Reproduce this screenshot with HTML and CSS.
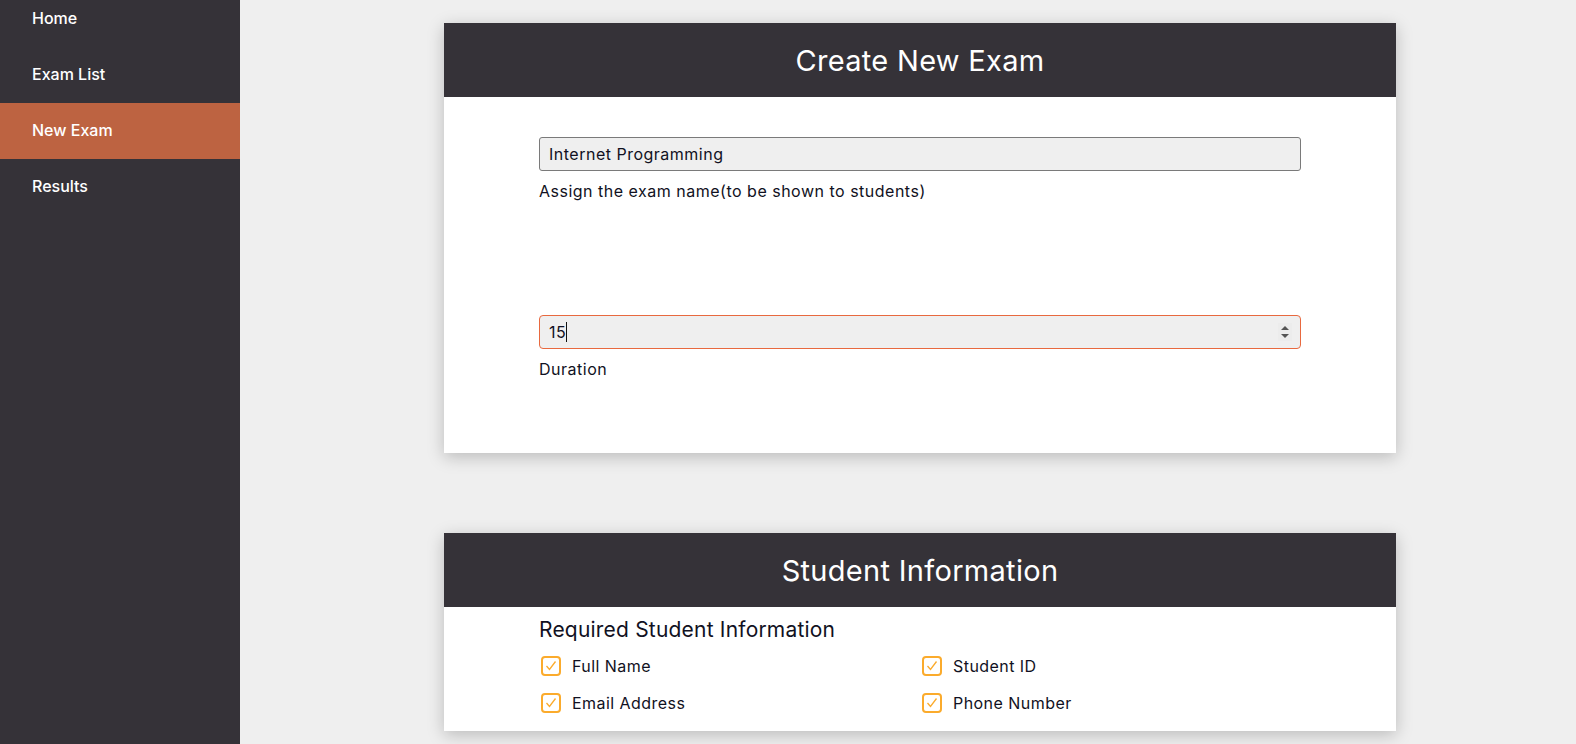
FILE: index.html
```html
<!DOCTYPE html>
<html lang="en">
<head>
<meta charset="utf-8">
<title>Create New Exam</title>
<link rel="stylesheet" href="styles.css">
</head>
<body>
<aside class="sidebar">
  <nav class="nav">
    <a class="nav-item" href="#">Home</a>
    <a class="nav-item" href="#">Exam List</a>
    <a class="nav-item active" href="#">New Exam</a>
    <a class="nav-item" href="#">Results</a>
  </nav>
</aside>
<main class="main">
  <section class="card">
    <header class="card-header"><h1 class="card-title">Create New Exam</h1></header>
    <div class="card-body exam-body">
      <div class="field">
        <input class="text-input" type="text" value="Internet Programming">
        <label class="hint">Assign the exam name(to be shown to students)</label>
      </div>
      <div class="field field-gap">
        <div class="input-wrap">
          <input class="text-input focused" type="number" value="15">
          <span class="caret"></span>
          <span class="spinner">
            <svg width="10" height="18" viewBox="0 0 10 18"><path d="M1 7 L5 3 L9 7 Z" fill="#555"/><path d="M1 11 L5 15 L9 11 Z" fill="#555"/></svg>
          </span>
        </div>
        <label class="hint">Duration</label>
      </div>
    </div>
  </section>

  <section class="card card-second">
    <header class="card-header"><h1 class="card-title">Student Information</h1></header>
    <div class="card-body info-body">
      <h2 class="info-heading">Required Student Information</h2>
      <div class="check-grid">
        <div class="check-item"><span class="box"><svg width="20" height="20" viewBox="0 0 20 20"><rect x="1" y="1" width="18" height="18" rx="3" fill="none" stroke="#fbab2c" stroke-width="2"/><path d="M5.5 10 L8.5 13.5 L14.5 5.5" fill="none" stroke="#fbab2c" stroke-width="1.3"/></svg></span><span class="check-label">Full Name</span></div>
        <div class="check-item"><span class="box"><svg width="20" height="20" viewBox="0 0 20 20"><rect x="1" y="1" width="18" height="18" rx="3" fill="none" stroke="#fbab2c" stroke-width="2"/><path d="M5.5 10 L8.5 13.5 L14.5 5.5" fill="none" stroke="#fbab2c" stroke-width="1.3"/></svg></span><span class="check-label">Student ID</span></div>
        <div class="check-item"><span class="box"><svg width="20" height="20" viewBox="0 0 20 20"><rect x="1" y="1" width="18" height="18" rx="3" fill="none" stroke="#fbab2c" stroke-width="2"/><path d="M5.5 10 L8.5 13.5 L14.5 5.5" fill="none" stroke="#fbab2c" stroke-width="1.3"/></svg></span><span class="check-label">Email Address</span></div>
        <div class="check-item"><span class="box"><svg width="20" height="20" viewBox="0 0 20 20"><rect x="1" y="1" width="18" height="18" rx="3" fill="none" stroke="#fbab2c" stroke-width="2"/><path d="M5.5 10 L8.5 13.5 L14.5 5.5" fill="none" stroke="#fbab2c" stroke-width="1.3"/></svg></span><span class="check-label">Phone Number</span></div>
      </div>
    </div>
  </section>
</main>
</body>
</html>
```

FILE: styles.css
```css
* { box-sizing: border-box; }
html, body { margin: 0; padding: 0; }
body {
  display: flex;
  min-height: 744px;
  height: 744px;
  overflow: hidden;
  background: #efefef;
  font-family: "Inter", "DejaVu Sans", sans-serif;
  color: #111122;
}
.sidebar {
  width: 240px;
  flex: 0 0 240px;
  background: #353238;
}
.nav {
  display: flex;
  flex-direction: column;
  margin-top: -9px;
}
.nav-item {
  display: block;
  height: 56px;
  line-height: 54px;
  padding: 0 0 2px 32px;
  color: #ffffff;
  text-decoration: none;
  font-size: 16px;
  font-weight: 500;
}
.nav-item.active { background: #bd6341; }
.main {
  flex: 1;
  padding: 23px 0 0 204px;
}
.card {
  width: 952px;
  background: #ffffff;
  box-shadow: 0 4px 16px rgba(0,0,0,0.22);
}
.card-second { margin-top: 80px; }
.card-header {
  height: 74px;
  background: #353238;
  display: flex;
  align-items: center;
  justify-content: center;
}
.card-title {
  margin: 0;
  color: #ffffff;
  font-size: 29px;
  font-weight: 400;
  letter-spacing: 0.3px;
}
.card-body { padding: 0 95px; }
.exam-body { padding-top: 40px; padding-bottom: 72px; }
.field { display: flex; flex-direction: column; }
.field-gap { margin-top: 112px; }
.text-input {
  width: 100%;
  height: 34px;
  border: 1px solid #7a7a7a;
  border-radius: 3px;
  background: #efefef;
  padding: 0 9px;
  font-family: inherit;
  font-size: 16px;
  letter-spacing: 0.5px;
  color: #111122;
  outline: none;
}
.text-input.focused { border-color: #e8693f; border-radius: 4px; }
.text-input[type=number]::-webkit-inner-spin-button,
.text-input[type=number]::-webkit-outer-spin-button { -webkit-appearance: none; margin: 0; }
.input-wrap { position: relative; }
.caret {
  position: absolute;
  left: 27px;
  top: 7px;
  width: 1px;
  height: 20px;
  background: #111;
}
.spinner {
  position: absolute;
  right: 9px;
  top: 8px;
  width: 14px;
  height: 18px;
  display: flex;
  justify-content: center;
  background: #ececec;
}
.hint {
  display: block;
  margin-top: 8px;
  line-height: 24px;
  font-size: 16px;
  letter-spacing: 0.5px;
}
.info-body { padding-top: 8px; padding-bottom: 10px; }
.info-heading {
  margin: 0;
  font-size: 21px;
  font-weight: 400;
  line-height: 30px;
  letter-spacing: 0.2px;
}
.check-grid {
  margin-top: 2px;
  display: grid;
  grid-template-columns: 1fr 1fr;
  grid-auto-rows: 37px;
}
.check-item {
  display: flex;
  align-items: center;
  padding-left: 2px;
}
.box { width: 20px; height: 20px; display: flex; }
.check-label {
  margin-left: 11px;
  font-size: 16px;
  letter-spacing: 0.45px;
}
```
